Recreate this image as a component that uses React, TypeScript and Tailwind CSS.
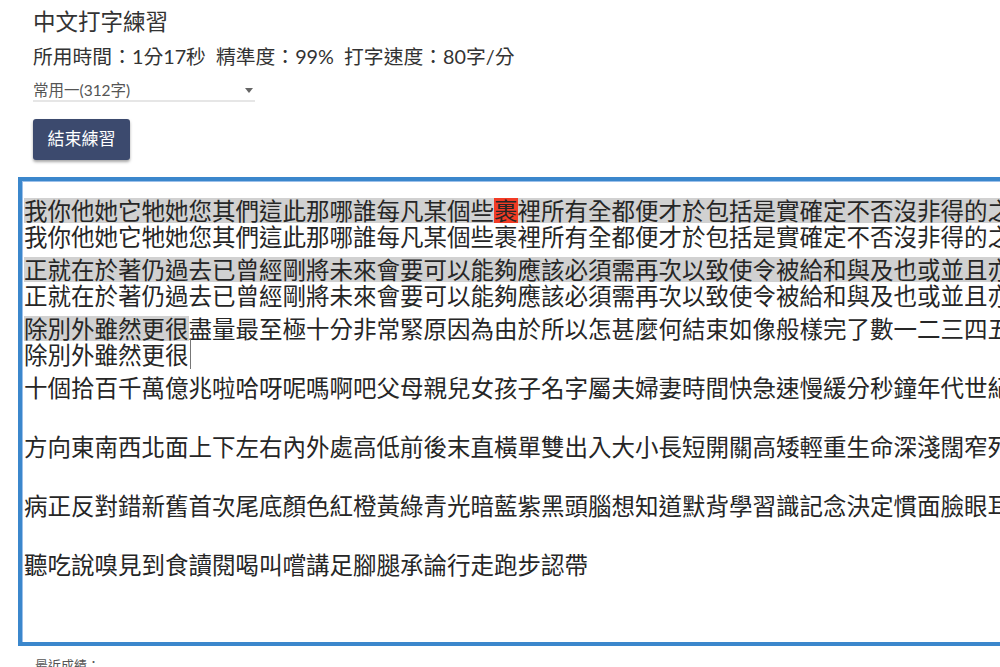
const CJK = '"Noto Sans CJK TC", sans-serif';

const pairs: { done: string; err?: string; rest: string; typed: string; caret?: boolean }[] = [
  {
    done: "我你他她它牠她您其們這此那哪誰每凡某個些",
    err: "裹",
    rest: "裡所有全都便才於包括是實確定不否沒非得的之乎",
    typed: "我你他她它牠她您其們這此那哪誰每凡某個些裹裡所有全都便才於包括是實確定不否沒非得的之乎",
  },
  {
    done: "正就在於著仍過去已曾經剛將未來會要可以能夠應該必須需再次以致使令被給和與及也或並且亦又",
    rest: "",
    typed: "正就在於著仍過去已曾經剛將未來會要可以能夠應該必須需再次以致使令被給和與及也或並且亦又",
  },
  {
    done: "除別外雖然更很",
    rest: "盡量最至極十分非常緊原因為由於所以怎甚麼何結束如像般樣完了數一二三四五六七",
    typed: "除別外雖然更很",
    caret: true,
  },
  { done: "", rest: "十個拾百千萬億兆啦哈呀呢嗎啊吧父母親兒女孩子名字屬夫婦妻時間快急速慢緩分秒鐘年代世紀前", typed: "" },
  { done: "", rest: "方向東南西北面上下左右內外處高低前後末直橫單雙出入大小長短開關高矮輕重生命深淺闊窄死活", typed: "" },
  { done: "", rest: "病正反對錯新舊首次尾底顏色紅橙黃綠青光暗藍紫黑頭腦想知道默背學習識記念決定慣面臉眼耳口", typed: "" },
  { done: "", rest: "聽吃說嗅見到食讀閱喝叫嚐講足腳腿承論行走跑步認帶", typed: "" },
];

export default function App() {
  return (
    <div
      className="h-[667px] w-[1000px] overflow-hidden bg-white text-[#333]"
      style={{ fontFamily: `Lato, ${CJK}` }}
    >
      <div className="pl-[33px] pt-[8px]">
        <h1 className="text-[22.5px] leading-[28px] font-normal text-[#333]">中文打字練習</h1>
        <div className="mt-[7px] whitespace-nowrap text-[19.8px] leading-[26px] text-[#333]">
          所用時間：1分17秒&nbsp;&nbsp;精準度：99%&nbsp;&nbsp;打字速度：80字/分
        </div>
        <div className="mt-[11px] flex w-[222px] items-center justify-between border-b-2 border-[#e6e6e6] text-[15.5px] leading-[20px] text-[#555]">
          <span>常用一(312字)</span>
          <span className="mr-[2px] h-0 w-0 border-x-[4px] border-t-[5px] border-x-transparent border-t-[#666]" />
        </div>
        <button
          type="button"
          className="mt-[17px] h-[41px] w-[97px] rounded-[3px] bg-[#3c4a6e] text-[17px] text-white shadow-[0_2px_3px_rgba(0,0,0,0.35)]"
          style={{ fontFamily: `"Liberation Serif", ${CJK}` }}
        >
          結束練習
        </button>
      </div>
      <div className="ml-[18px] mt-[17px] h-[469px] w-[1100px] border-4 border-[#3b87cc] shadow-[inset_1px_1px_0_#9cc0ea]">
        <div
          className="overflow-hidden pl-[2px] pt-[16px] text-[23.5px] text-[#262626]"
          style={{ fontFamily: CJK }}
        >
          {pairs.map((p, i) => (
            <div key={i} className="mb-[7px]">
              <div className="h-[26px] whitespace-nowrap leading-[26px]">
                {p.done ? (
                  <span className="inline-block h-[25px] bg-[#d1d1d1] leading-[25px]">
                    {p.done}
                    {p.err ? <span className="inline-block bg-[#f23b25]">{p.err}</span> : null}
                    {p.err ? p.rest : null}
                  </span>
                ) : null}
                {p.err ? null : p.rest}
              </div>
              <div className="flex h-[26px] items-center whitespace-nowrap leading-[26px]">
                <span>{p.typed}</span>
                {p.caret ? <span className="ml-[1px] h-[30px] w-px bg-[#777]" /> : null}
              </div>
            </div>
          ))}
        </div>
      </div>
      <div className="mt-[10px] pl-[35px] text-[13px] text-[#555]">最近成績：</div>
    </div>
  );
}
